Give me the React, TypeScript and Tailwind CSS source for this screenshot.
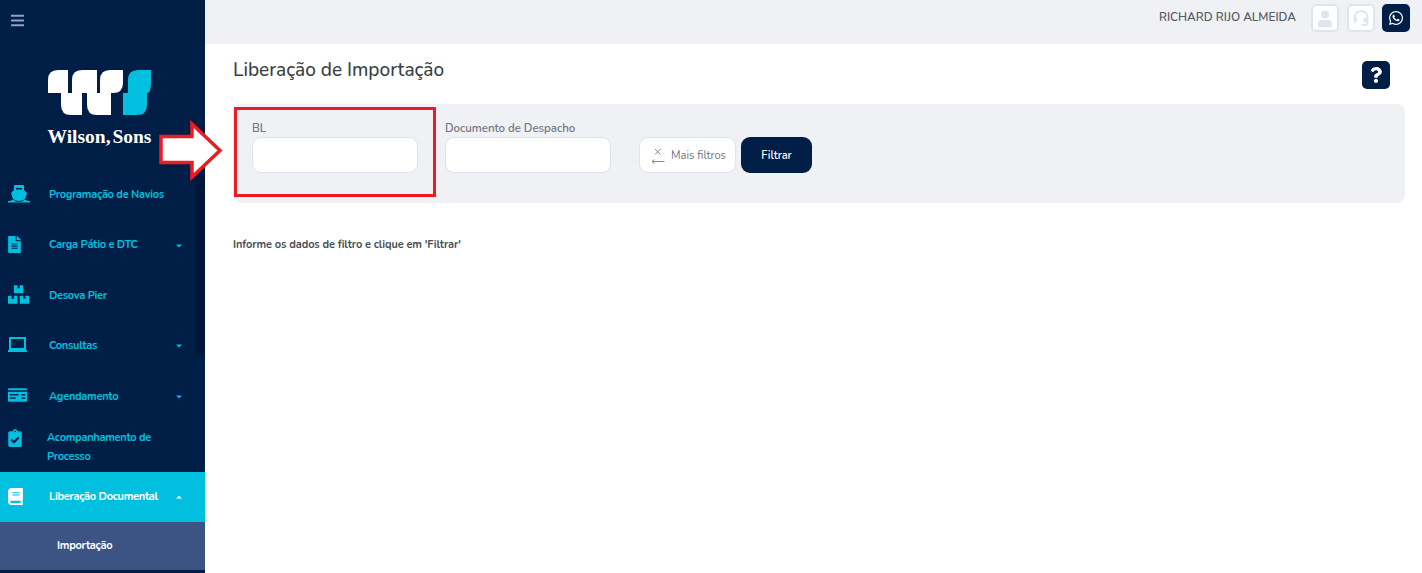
import { FaBars, FaBoxes, FaBook, FaClipboardCheck, FaFileAlt, FaQuestion, FaWhatsapp } from "react-icons/fa";

const font = "font-['Nunito','Lato','Noto_Sans',sans-serif]";

const Caret = ({ up }: { up?: boolean }) => (
  <svg className="absolute left-[176px] top-1/2 -translate-y-1/2" width="6" height="4" viewBox="0 0 6 4">
    <path d={up ? "M0 3.500 L3 0.500 L6 3.500 Z" : "M0 0.500 L6 0.500 L3 3.500 Z"} fill={up ? "#fff" : "#00bfdf"} />
  </svg>
);

const ShipIcon = () => (
  <svg width="22" height="18" viewBox="0 0 22 18" fill="#00bfdf">
    <path d="M7 0H15Q16 0 16 1V5L19 8L17 14Q14 16 11 16Q8 16 5 14L3 8L6 5V1Q6 0 7 0Z" />
    <rect x="8" y="3" width="6" height="1.500" fill="#001e46" />
    <path d="M0 16Q3 16 5 14.500Q8 17 11 17Q14 17 17 14.500Q19 16 22 16V17.500H0Z" />
  </svg>
);

const LaptopIcon = () => (
  <svg width="19" height="15" viewBox="0 0 19 15" fill="#00bfdf">
    <rect x="2" y="1" width="15" height="11" fill="none" stroke="#00bfdf" strokeWidth="2" />
    <rect x="0" y="13" width="19" height="2" />
    <rect x="6" y="11" width="7" height="2" />
  </svg>
);

const CardIcon = () => (
  <svg width="19" height="14" viewBox="0 0 20 14" fill="#00bfdf">
    <path d="M1 0h18a1 1 0 0 1 1 1v1H0V1a1 1 0 0 1 1-1z" />
    <path d="M0 3.500h20V13a1 1 0 0 1-1 1H1a1 1 0 0 1-1-1z" />
    <rect x="2" y="6" width="9" height="1.500" fill="#001e46" />
    <rect x="2" y="9.500" width="6" height="1.500" fill="#001e46" />
    <rect x="14" y="6" width="4" height="1.500" fill="#001e46" />
    <rect x="14" y="9.500" width="4" height="1.500" fill="#001e46" />
  </svg>
);

const UserIcon = () => (
  <svg width="16" height="17" viewBox="0 0 16 17" fill="#dfe4ef">
    <circle cx="8" cy="4.500" r="4" />
    <path d="M1 17V13.500Q1 10 5 10H11Q15 10 15 13.500V17Z" />
  </svg>
);

const HeadsetIcon = () => (
  <svg width="16" height="17" viewBox="0 0 16 17" fill="none" stroke="#dfe4ef" strokeWidth="1.800">
    <path d="M1.500 9V7.500A6.500 6.500 0 0 1 14.500 7.500V12Q14.500 15 11 15H8.500" />
    <rect x="1" y="7.500" width="3" height="5" rx="1.200" fill="#dfe4ef" stroke="none" />
    <rect x="10.500" y="7.500" width="3" height="5" rx="1.200" fill="#dfe4ef" stroke="none" />
  </svg>
);

const Logo = () => (
  <svg width="103" height="45" viewBox="0 0 103 45">
    <path fill="#fff" d="M10 0H20V23H34V45H23Q13 45 13 35V23H0V10Q0 0 10 0Z" />
    <path fill="#fff" d="M34 0H49V23H63V45H49Q39 45 39 35V23H24V10Q24 0 34 0Z" />
    <path fill="#fff" d="M62 0H75V13Q75 23 65 23H52V10Q52 0 62 0Z" />
    <path fill="#00bfdf" d="M90 0H103V13Q103 23 99 23V35Q99 45 89 45H75V23H80V10Q80 0 90 0Z" />
  </svg>
);

type Item = {
  label: string;
  icon: React.ReactNode;
  caret?: boolean;
};

const items: Item[] = [
  { label: "Programação de Navios", icon: <ShipIcon /> },
  { label: "Carga Pátio e DTC", icon: <FaFileAlt size={17} className="-ml-[2px]" />, caret: true },
  { label: "Desova Pier", icon: <FaBoxes size={21} /> },
  { label: "Consultas", icon: <LaptopIcon />, caret: true },
  { label: "Agendamento", icon: <CardIcon />, caret: true },
];

const Sidebar = () => (
  <aside className="w-[205px] h-[573px] shrink-0 bg-[#001e46] flex flex-col overflow-hidden">
    <div className="h-[40px] pl-[10px] flex items-center text-[#8fa3c4]">
      <FaBars size={15} />
    </div>
    <div className="h-[130px] pr-[6px] flex flex-col items-center">
      <div className="mt-[30px]">
        <Logo />
      </div>
      <span className="mt-[10px] text-white text-[19.5px] leading-[24px] font-bold [word-spacing:-3px] font-['Liberation_Serif',serif]">
        Wilson, Sons
      </span>
    </div>
    <nav className="flex flex-col text-[11px] font-bold tracking-[-0.28px] text-[#00bfdf]">
      {items.map((item) => (
        <div key={item.label} className="relative h-[50.4px] flex items-center">
          <span className="w-[49px] pl-[8px] -mt-[3px] flex">{item.icon}</span>
          <span>{item.label}</span>
          {item.caret && <Caret />}
        </div>
      ))}
      <div className="h-[50px] flex items-center">
        <span className="w-[47px] pl-[8px] flex -mt-[18px]">
          <FaClipboardCheck size={18} className="-ml-[2px]" />
        </span>
        <span className="leading-[19px] w-[130px]">Acompanhamento de Processo</span>
      </div>
      <div className="relative h-[50px] flex items-center bg-[#00bfdf] text-white">
        <span className="w-[49px] pl-[8px] flex">
          <FaBook size={17} className="-ml-[1px]" />
        </span>
        <span>Liberação Documental</span>
        <Caret up />
      </div>
      <div className="h-[48px] pl-[57px] flex items-center bg-[#3c5484] text-white">Importação</div>
    </nav>
  </aside>
);

const Field = ({ label }: { label: string }) => (
  <label className="w-[166px] flex flex-col">
    <span className="h-[33px] pt-[17px] text-[11.5px] leading-[14px] font-semibold tracking-[-0.05px] text-[#72767f]">{label}</span>
    <input className="h-[36px] bg-white border border-[#dfe3ee] rounded-[9px]" type="text" />
  </label>
);

const TopButton = ({ children, dark }: { children: React.ReactNode; dark?: boolean }) => (
  <span
    className={
      dark
        ? "w-[28px] h-[28px] flex items-center justify-center rounded-[5px] bg-[#001e46] text-white"
        : "w-[28px] h-[28px] flex items-center justify-center rounded-[5px] bg-white border-2 border-[#dfe4ef]"
    }
  >
    {children}
  </span>
);

const App = () => {
  return (
    <div className={`relative w-[1422px] h-[573px] flex overflow-hidden bg-white ${font}`}>
      <Sidebar />
      <main className="flex-1 min-w-0">
        <header className="h-[44px] bg-[#f0f1f5] flex items-center justify-end pr-[12px] pb-[8px]">
          <span className="mr-[15px] -mt-[1px] text-[11.8px] font-semibold text-[#555a62]">RICHARD RIJO ALMEIDA</span>
          <div className="flex gap-[7.500px]">
            <TopButton>
              <UserIcon />
            </TopButton>
            <TopButton>
              <HeadsetIcon />
            </TopButton>
            <TopButton dark>
              <FaWhatsapp size={16} />
            </TopButton>
          </div>
        </header>
        <div className="pl-[28px] pr-[17px]">
          <div className="h-[60px] flex justify-between">
            <h1 className="mt-[14px] text-[19px] leading-[24px] font-medium text-[#3a3f45]">Liberação de Importação</h1>
            <span className="mt-[17px] mr-[15px] w-[28px] h-[28px] flex items-center justify-center rounded-[5px] bg-[#001e46] text-white">
              <FaQuestion size={16} />
            </span>
          </div>
          <section className="h-[99px] bg-[#f0f1f5] rounded-[8px] pl-[19px] flex items-start gap-[27px]">
            <Field label="BL" />
            <Field label="Documento de Despacho" />
            <div className="mt-[33px] ml-[1px] flex gap-[5px]">
              <button className="w-[97px] h-[36px] pt-[2px] pl-[2px] bg-white border border-[#dfe3ee] rounded-[9px] flex items-center justify-center gap-[6px] text-[11.1px] text-[#72767f]" type="button">
                <svg width="14" height="17" viewBox="0 0 14 17" fill="none" stroke="#85898f" strokeWidth="1">
                  <path d="M4 1L9.500 6.500M9.500 1L4 6.500" />
                  <path d="M13.500 13.500H1M3.500 11.500L1 13.500L3.500 15.500" />
                </svg>
                Mais filtros
              </button>
              <button className="w-[71px] h-[36px] pt-[2px] bg-[#001e46] rounded-[9px] text-white text-[11px] font-semibold" type="button">
                Filtrar
              </button>
            </div>
          </section>
          <p className="mt-[35px] text-[11px] leading-[14px] font-bold tracking-[-0.1px] text-[#4a4f55]">
            Informe os dados de filtro e clique em 'Filtrar'
          </p>
        </div>
      </main>
      {/* anotacoes por cima do print */}
      <div className="absolute left-[195px] top-[174px] w-[10px] h-[181px] bg-[#00173a]" />
      <div className="absolute left-[234px] top-[107px] w-[202px] h-[89.500px] border-[3.500px] border-[#ed1c24]" />
      <svg className="absolute left-[159px] top-[120px]" width="66" height="62" viewBox="0 0 66 62">
        <path d="M2 16.500H33V4L61 30.500L33 57V42.500H2Z" fill="#fff" stroke="#ed1c24" strokeWidth="3.500" />
      </svg>
    </div>
  );
};

export default App;
